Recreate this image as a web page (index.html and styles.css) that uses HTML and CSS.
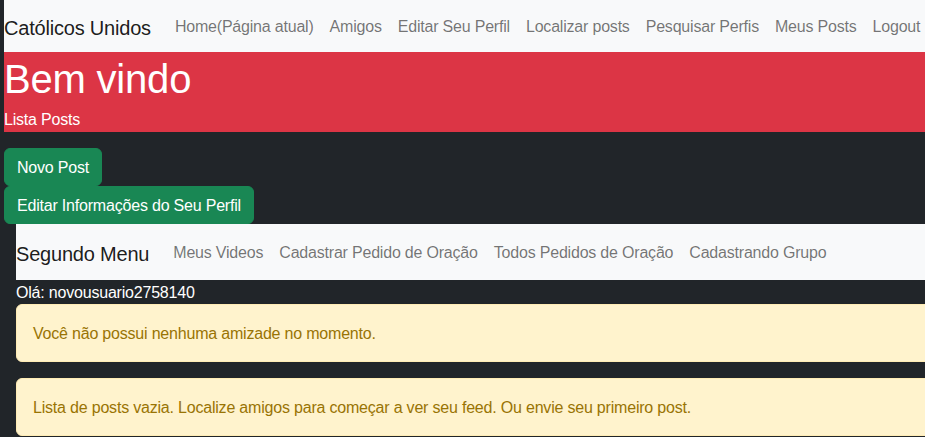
FILE: index.html
```html
<!DOCTYPE html>
<html lang="pt-BR">
<head>
<meta charset="utf-8">
<title>Católicos Unidos</title>
<link rel="stylesheet" href="styles.css">
</head>
<body class="page">
  <nav class="topbar">
    <a class="brand" href="#">Católicos Unidos</a>
    <ul class="nav-list">
      <li><a class="nav-link" href="#">Home(Página atual)</a></li>
      <li><a class="nav-link" href="#">Amigos</a></li>
      <li><a class="nav-link" href="#">Editar Seu Perfil</a></li>
      <li><a class="nav-link" href="#">Localizar posts</a></li>
      <li><a class="nav-link" href="#">Pesquisar Perfis</a></li>
      <li><a class="nav-link" href="#">Meus Posts</a></li>
      <li><a class="nav-link" href="#">Logout</a></li>
    </ul>
  </nav>

  <header class="hero">
    <h1 class="hero-title">Bem vindo</h1>
    <p class="hero-sub">Lista Posts</p>
  </header>

  <div class="actions">
    <a class="btn" href="#">Novo Post</a>
    <a class="btn" href="#">Editar Informações do Seu Perfil</a>
  </div>

  <section class="content">
    <nav class="subbar">
      <a class="brand" href="#">Segundo Menu</a>
      <ul class="nav-list">
        <li><a class="nav-link" href="#">Meus Videos</a></li>
        <li><a class="nav-link" href="#">Cadastrar Pedido de Oração</a></li>
        <li><a class="nav-link" href="#">Todos Pedidos de Oração</a></li>
        <li><a class="nav-link" href="#">Cadastrando Grupo</a></li>
      </ul>
    </nav>
    <p class="greeting">Olá: novousuario2758140</p>
    <div class="alert">Você não possui nenhuma amizade no momento.</div>
    <div class="alert">Lista de posts vazia. Localize amigos para começar a ver seu feed. Ou envie seu primeiro post.</div>
  </section>
</body>
</html>
```

FILE: styles.css
```css
html {
  overflow: hidden;
}

.page {
  margin: 0;
  padding: 0 0 0 4px;
  background: #212529;
  color: #fff;
  font-family: "Liberation Sans", Arial, sans-serif;
  font-size: 16px;
  line-height: 1.5;
  letter-spacing: -0.2px;
  min-height: 437px;
}

a {
  text-decoration: none;
}

.topbar,
.subbar {
  display: flex;
  align-items: center;
  flex-wrap: nowrap;
  white-space: nowrap;
  background: #f8f9fa;
}

.topbar {
  height: 52px;
}

.subbar {
  height: 56px;
}

.brand {
  font-size: 20px;
  line-height: 30px;
  padding-top: 3px;
  color: rgba(0, 0, 0, 0.9);
  margin-right: 16px;
}

.nav-list {
  display: flex;
  list-style: none;
  margin: 0;
  padding: 0;
}

.nav-link {
  display: block;
  padding: 2px 8px 0;
  line-height: 24px;
  color: rgba(0, 0, 0, 0.55);
}

.hero {
  background: #dc3545;
  color: #fff;
}

.hero-title {
  margin: 0 0 4px;
  padding-top: 3px;
  font-size: 40px;
  line-height: 48px;
  font-weight: 400;
}

.hero-sub {
  margin: 0;
  padding-top: 1px;
  line-height: 24px;
}

.actions {
  display: flex;
  flex-direction: column;
  align-items: flex-start;
  padding-top: 16px;
}

.btn {
  display: inline-block;
  padding: 7px 12px 5px;
  border: 1px solid #198754;
  border-radius: 6px;
  background: #198754;
  color: #fff;
  line-height: 24px;
}

.content {
  margin-left: 12px;
  margin-right: -20px;
}

.greeting {
  margin: 0;
  padding-top: 1px;
  line-height: 23px;
}

.alert {
  padding: 17px 16px 15px;
  margin-bottom: 16px;
  border: 1px solid #ffecb5;
  border-radius: 6px;
  background: #fff3cd;
  color: #997404;
  line-height: 24px;
  white-space: nowrap;
}
```
